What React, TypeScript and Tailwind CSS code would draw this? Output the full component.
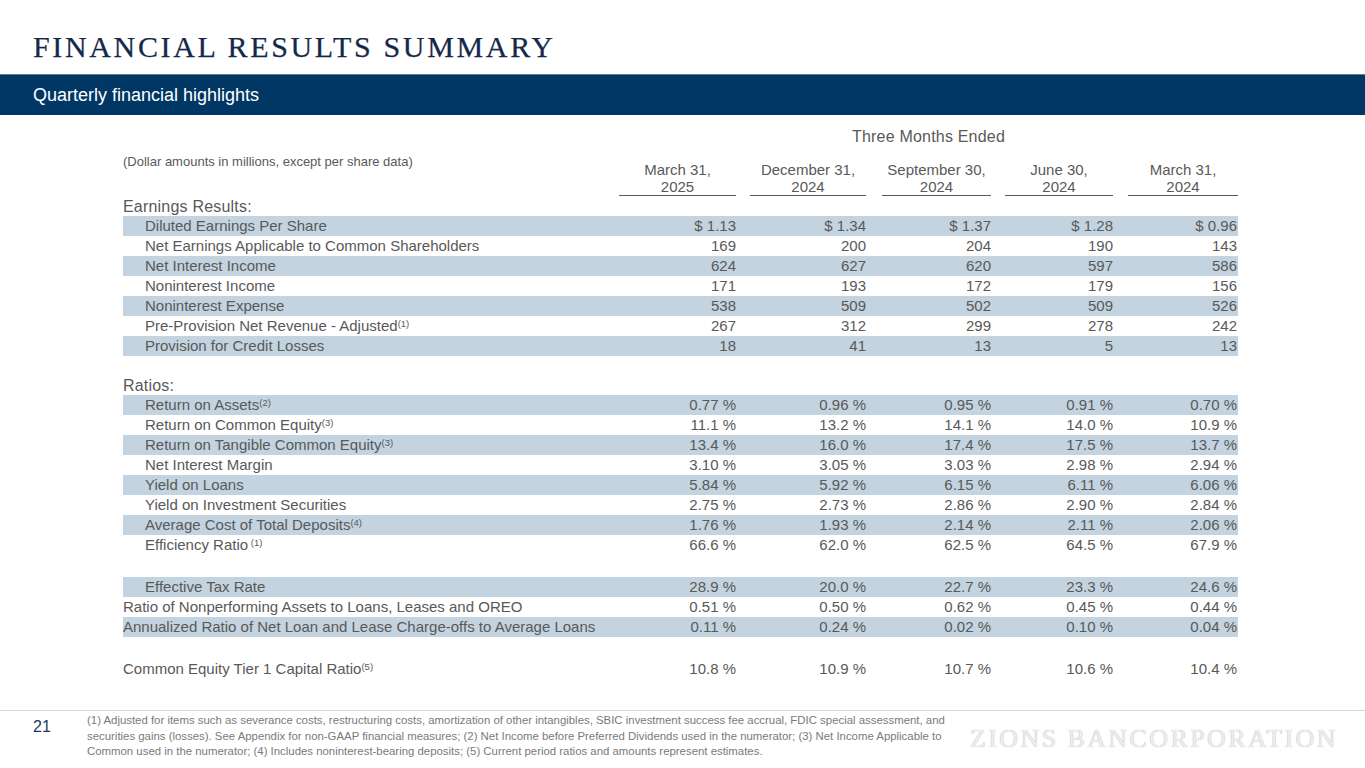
import React from "react";

type Row = {
  label: string;
  sup?: string;
  supSpace?: boolean;
  values: string[];
  band?: boolean;
  indent?: boolean;
};

const earnings: Row[] = [
  { label: "Diluted Earnings Per Share", values: ["$ 1.13", "$ 1.34", "$ 1.37", "$ 1.28", "$ 0.96"], band: true, indent: true },
  { label: "Net Earnings Applicable to Common Shareholders", values: ["169", "200", "204", "190", "143"], indent: true },
  { label: "Net Interest Income", values: ["624", "627", "620", "597", "586"], band: true, indent: true },
  { label: "Noninterest Income", values: ["171", "193", "172", "179", "156"], indent: true },
  { label: "Noninterest Expense", values: ["538", "509", "502", "509", "526"], band: true, indent: true },
  { label: "Pre-Provision Net Revenue - Adjusted", sup: "(1)", values: ["267", "312", "299", "278", "242"], indent: true },
  { label: "Provision for Credit Losses", values: ["18", "41", "13", "5", "13"], band: true, indent: true },
];

const ratios: Row[] = [
  { label: "Return on Assets", sup: "(2)", values: ["0.77 %", "0.96 %", "0.95 %", "0.91 %", "0.70 %"], band: true, indent: true },
  { label: "Return on Common Equity", sup: "(3)", values: ["11.1 %", "13.2 %", "14.1 %", "14.0 %", "10.9 %"], indent: true },
  { label: "Return on Tangible Common Equity", sup: "(3)", values: ["13.4 %", "16.0 %", "17.4 %", "17.5 %", "13.7 %"], band: true, indent: true },
  { label: "Net Interest Margin", values: ["3.10 %", "3.05 %", "3.03 %", "2.98 %", "2.94 %"], indent: true },
  { label: "Yield on Loans", values: ["5.84 %", "5.92 %", "6.15 %", "6.11 %", "6.06 %"], band: true, indent: true },
  { label: "Yield on Investment Securities", values: ["2.75 %", "2.73 %", "2.86 %", "2.90 %", "2.84 %"], indent: true },
  { label: "Average Cost of Total Deposits", sup: "(4)", values: ["1.76 %", "1.93 %", "2.14 %", "2.11 %", "2.06 %"], band: true, indent: true },
  { label: "Efficiency Ratio", sup: "(1)", supSpace: true, values: ["66.6 %", "62.0 %", "62.5 %", "64.5 %", "67.9 %"], indent: true },
];

const other: Row[] = [
  { label: "Effective Tax Rate", values: ["28.9 %", "20.0 %", "22.7 %", "23.3 %", "24.6 %"], band: true, indent: true },
  { label: "Ratio of Nonperforming Assets to Loans, Leases and OREO", values: ["0.51 %", "0.50 %", "0.62 %", "0.45 %", "0.44 %"] },
  { label: "Annualized Ratio of Net Loan and Lease Charge-offs to Average Loans", values: ["0.11 %", "0.24 %", "0.02 %", "0.10 %", "0.04 %"], band: true },
];

const cet1: Row = {
  label: "Common Equity Tier 1 Capital Ratio",
  sup: "(5)",
  values: ["10.8 %", "10.9 %", "10.7 %", "10.6 %", "10.4 %"],
};

const GRID = "grid grid-cols-[482px_131px_130px_125px_122px_125px]";

function DataRow({ row }: { row: Row }) {
  return (
    <div className={`${GRID} h-[20px] leading-[20px] text-[15px] ${row.band ? "bg-[#c3d3df]" : ""}`}>
      <div className={`whitespace-nowrap ${row.indent ? "pl-[22px]" : ""}`}>
        {row.label}
        {row.sup && (
          <span className="text-[9.5px] relative -top-[4px]">
            {row.supSpace ? " " : ""}
            {row.sup}
          </span>
        )}
      </div>
      {row.values.map((v, i) => (
        <div key={i} className={`text-right whitespace-nowrap ${i === 4 ? "pr-[1px]" : ""}`}>
          {v}
        </div>
      ))}
    </div>
  );
}

const headers: { l1: string; l2: string; ml: string }[] = [
  { l1: "March 31,", l2: "2025", ml: "ml-[14px]" },
  { l1: "December 31,", l2: "2024", ml: "ml-[14px]" },
  { l1: "September 30,", l2: "2024", ml: "ml-[16px]" },
  { l1: "June 30,", l2: "2024", ml: "ml-[14px]" },
  { l1: "March 31,", l2: "2024", ml: "ml-[15px]" },
];

export default function App() {
  return (
    <div
      className="w-[1365px] h-[768px] bg-white flex flex-col overflow-hidden text-[#595959]"
      style={{ fontFamily: '"Liberation Sans", Arial, sans-serif' }}
    >
      {/* Title */}
      <div className="h-[74px] pt-[32px] pl-[33px]">
        <h1
          className="text-[30px] leading-[30px] tracking-[2.65px] text-[#14294a] whitespace-nowrap [-webkit-text-stroke:0.25px_#14294a]"
          style={{ fontFamily: '"Liberation Serif", "Times New Roman", serif' }}
        >
          FINANCIAL RESULTS SUMMARY
        </h1>
      </div>

      {/* Section bar */}
      <div className="h-[41px] bg-[#003764] border-t border-[#5f7f9f] pl-[33px] flex items-center">
        <span className="text-white text-[18px] leading-[22px]">Quarterly financial highlights</span>
      </div>

      {/* Table */}
      <div className="pt-[12px] ml-[123px] w-[1115px]">
        <div className={`${GRID} h-[20px]`}>
          <div />
          <div className="col-span-5 pl-[14px] text-center text-[16px] leading-[20px] tracking-[0.2px]">
            Three Months Ended
          </div>
        </div>
        <div className={`${GRID}`}>
          <div className="pt-[7px] text-[13px] leading-[16px] whitespace-nowrap">
            (Dollar amounts in millions, except per share data)
          </div>
          {headers.map((h, i) => (
            <div key={i} className={`${h.ml} pt-[14px] border-b border-[#595959] text-center text-[15px] leading-[17px] whitespace-nowrap`}>
              <div>{h.l1}</div>
              <div>{h.l2}</div>
            </div>
          ))}
        </div>

        <div className="h-[20px] leading-[21px] text-[16px] tracking-[0.2px]">Earnings Results:</div>
        {earnings.map((r, i) => (
          <DataRow key={i} row={r} />
        ))}
        <div className="h-[19px]" />
        <div className="h-[20px] leading-[21px] text-[16px] tracking-[0.2px]">Ratios:</div>
        {ratios.map((r, i) => (
          <DataRow key={i} row={r} />
        ))}
        <div className="h-[22px]" />
        {other.map((r, i) => (
          <DataRow key={i} row={r} />
        ))}
        <div className="h-[22px]" />
        <DataRow row={cet1} />
      </div>

      {/* Footer */}
      <div className="mt-auto h-[58px] border-t border-[#d9d9d9] flex pl-[33px]">
        <div className="w-[54px] pt-[8px] text-[16px] leading-[16px] text-[#1f3864]">21</div>
        <div className="w-[883px] pt-[2px] text-[11.4px] leading-[15.5px] text-[#7a7a7a] whitespace-nowrap">
          <div>
            (1) Adjusted for items such as severance costs, restructuring costs, amortization of other intangibles, SBIC investment success fee accrual, FDIC special assessment, and
          </div>
          <div>
            securities gains (losses). See Appendix for non-GAAP financial measures; (2) Net Income before Preferred Dividends used in the numerator; (3) Net Income Applicable to
          </div>
          <div>
            Common used in the numerator; (4) Includes noninterest-bearing deposits; (5) Current period ratios and amounts represent estimates.
          </div>
        </div>
        <div
          className="pt-[13px] text-[26px] leading-[30px] tracking-[2.4px] text-[#ededed] whitespace-nowrap [text-shadow:0_0_1px_#a8a8a8]"
          style={{ fontFamily: '"Liberation Serif", "Times New Roman", serif' }}
        >
          ZIONS BANCORPORATION
        </div>
      </div>
    </div>
  );
}
